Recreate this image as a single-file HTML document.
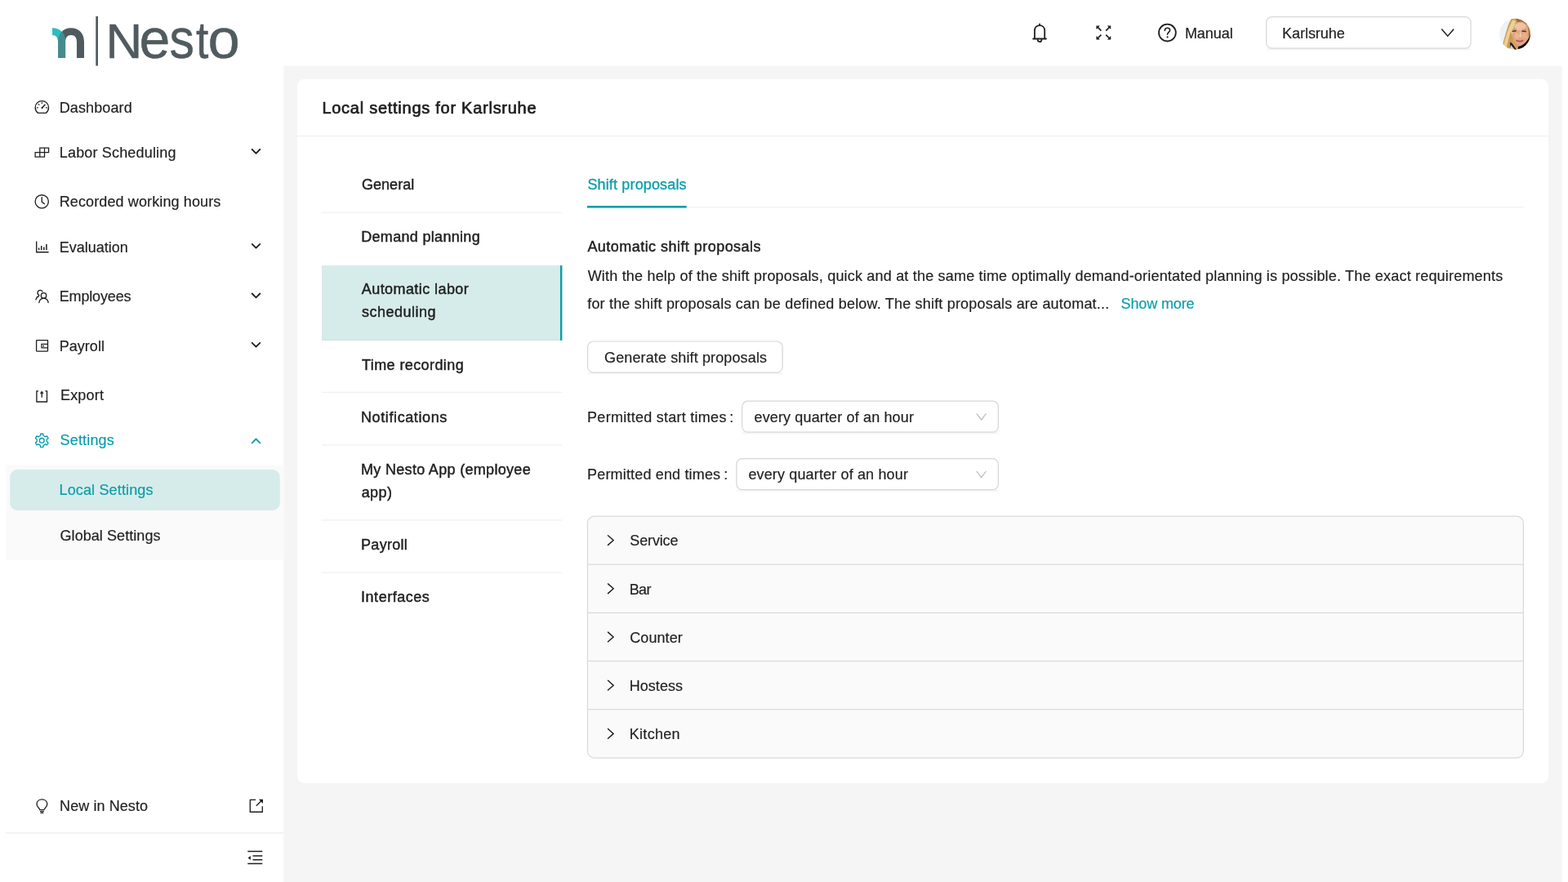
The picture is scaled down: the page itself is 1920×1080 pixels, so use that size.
<!DOCTYPE html>
<html lang="en">
<head>
<meta charset="utf-8">
<title>Nesto - Local settings for Karlsruhe</title>
<style>
*{box-sizing:border-box;margin:0;padding:0}
html,body{width:1920px;height:1080px;overflow:hidden;background:#fff}
body{position:relative;font-family:"Liberation Sans",sans-serif;font-size:18px;color:#1f1f1f}
.t{position:absolute;white-space:nowrap;line-height:24px;font-size:18px;-webkit-text-stroke:0.18px currentColor}
svg#bg,svg#ic{position:absolute;left:0;top:0;width:1920px;height:1080px;overflow:visible}
#txt{position:absolute;left:0;top:0;width:1920px;height:1080px;will-change:transform}
</style>
</head>
<body>
<svg id="bg" viewBox="0 0 1920 1080" width="1920" height="1080">
<rect x="347.30" y="80.70" width="1565.60" height="999.30" fill="#f5f5f5"/>
<rect x="364.00" y="96.70" width="1532.05" height="862.20" rx="9" fill="#ffffff"/>
<rect x="364.00" y="166.00" width="1532.05" height="1.20" fill="#f0f0f0"/>
<rect x="7.10" y="569.40" width="340.20" height="116.10" fill="#fafafa"/>
<rect x="12.20" y="575.00" width="330.55" height="49.90" rx="9" fill="#d6ecea"/>
<rect x="7.10" y="1019.40" width="340.20" height="1.20" fill="#ececec"/>
<rect x="394.00" y="259.60" width="294.20" height="1.20" fill="#f0f0f0"/>
<rect x="394.00" y="479.80" width="294.20" height="1.20" fill="#f0f0f0"/>
<rect x="394.00" y="544.40" width="294.20" height="1.20" fill="#f0f0f0"/>
<rect x="394.00" y="636.30" width="294.20" height="1.20" fill="#f0f0f0"/>
<rect x="394.00" y="700.50" width="294.20" height="1.20" fill="#f0f0f0"/>
<rect x="394.00" y="325.00" width="294.20" height="91.80" fill="#d6ecea"/>
<rect x="394.00" y="415.70" width="291.90" height="1.10" fill="#c9e1df"/>
<rect x="685.95" y="325.00" width="2.40" height="91.80" fill="#0a9daa"/>
<rect x="719.00" y="253.20" width="1147.00" height="1.20" fill="#f0f0f0"/>
<rect x="719.00" y="251.95" width="121.70" height="2.60" fill="#0a9daa"/>
<rect x="719.60" y="455.80" width="238.55" height="3.00" rx="3" fill="#000000" opacity="0.035"/>
<rect x="719.60" y="418.00" width="238.55" height="38.20" rx="6.90" fill="#ffffff" stroke="#d6d6d6" stroke-width="1.2"/>
<rect x="908.70" y="528.80" width="313.70" height="3.00" rx="3" fill="#000000" opacity="0.035"/>
<rect x="908.70" y="491.20" width="313.70" height="38.00" rx="6.90" fill="#ffffff" stroke="#d6d6d6" stroke-width="1.2"/>
<rect x="901.90" y="599.25" width="320.50" height="3.00" rx="3" fill="#000000" opacity="0.035"/>
<rect x="901.90" y="561.60" width="320.50" height="38.05" rx="6.90" fill="#ffffff" stroke="#d6d6d6" stroke-width="1.2"/>
<rect x="1550.60" y="58.80" width="250.40" height="3.00" rx="3" fill="#000000" opacity="0.035"/>
<rect x="1550.60" y="20.60" width="250.40" height="38.60" rx="6.90" fill="#ffffff" stroke="#d6d6d6" stroke-width="1.2"/>
<rect x="719.45" y="632.05" width="1145.95" height="296.05" rx="8.40" fill="#fafafa" stroke="#d9d9d9" stroke-width="1.2"/>
<rect x="719.50" y="690.60" width="1145.90" height="1.20" fill="#d9d9d9"/>
<rect x="719.50" y="749.85" width="1145.90" height="1.20" fill="#d9d9d9"/>
<rect x="719.50" y="808.90" width="1145.90" height="1.20" fill="#d9d9d9"/>
<rect x="719.50" y="868.10" width="1145.90" height="1.20" fill="#d9d9d9"/>
</svg>
<div id="txt">
<div class="t" style="left:1450.90px;top:29.06px;letter-spacing:-0.037px;">Manual</div>
<div class="t" style="left:1570.10px;top:29.06px;letter-spacing:-0.053px;">Karlsruhe</div>
<div class="t" style="left:72.75px;top:120.06px;letter-spacing:0.113px;">Dashboard</div>
<div class="t" style="left:72.80px;top:175.06px;letter-spacing:0.167px;">Labor Scheduling</div>
<div class="t" style="left:72.75px;top:235.06px;letter-spacing:0.117px;">Recorded working hours</div>
<div class="t" style="left:72.75px;top:291.06px;">Evaluation</div>
<div class="t" style="left:72.75px;top:351.06px;letter-spacing:-0.161px;">Employees</div>
<div class="t" style="left:72.75px;top:412.06px;letter-spacing:0.022px;">Payroll</div>
<div class="t" style="left:74.00px;top:472.06px;letter-spacing:0.176px;">Export</div>
<div class="t" style="left:73.50px;top:527.06px;color:#0a9daa;letter-spacing:0.180px;">Settings</div>
<div class="t" style="left:72.50px;top:588.06px;color:#0a9daa;letter-spacing:0.148px;">Local Settings</div>
<div class="t" style="left:73.50px;top:644.06px;letter-spacing:0.066px;">Global Settings</div>
<div class="t" style="left:73.10px;top:975.06px;letter-spacing:0.079px;">New in Nesto</div>
<div class="t" style="left:394.40px;top:120.37px;font-size:20px;letter-spacing:0.736px;-webkit-text-stroke:0.7px currentColor;">Local settings for Karlsruhe</div>
<div class="t" style="left:443.00px;top:214.06px;letter-spacing:0.027px;-webkit-text-stroke:0.45px currentColor;">General</div>
<div class="t" style="left:442.20px;top:278.06px;letter-spacing:0.315px;-webkit-text-stroke:0.45px currentColor;">Demand planning</div>
<div class="t" style="left:442.80px;top:342.06px;letter-spacing:0.424px;-webkit-text-stroke:0.45px currentColor;">Automatic labor</div>
<div class="t" style="left:442.90px;top:370.06px;letter-spacing:0.494px;-webkit-text-stroke:0.45px currentColor;">scheduling</div>
<div class="t" style="left:443.00px;top:435.06px;letter-spacing:0.411px;-webkit-text-stroke:0.45px currentColor;">Time recording</div>
<div class="t" style="left:442.00px;top:499.06px;letter-spacing:0.605px;-webkit-text-stroke:0.45px currentColor;">Notifications</div>
<div class="t" style="left:442.00px;top:563.06px;letter-spacing:0.315px;-webkit-text-stroke:0.45px currentColor;">My Nesto App (employee</div>
<div class="t" style="left:442.70px;top:591.06px;letter-spacing:0.423px;-webkit-text-stroke:0.45px currentColor;">app)</div>
<div class="t" style="left:442.10px;top:655.06px;letter-spacing:0.263px;-webkit-text-stroke:0.45px currentColor;">Payroll</div>
<div class="t" style="left:442.10px;top:719.06px;letter-spacing:0.507px;-webkit-text-stroke:0.45px currentColor;">Interfaces</div>
<div class="t" style="left:719.40px;top:214.06px;color:#0a9daa;letter-spacing:0.152px;-webkit-text-stroke:0.32px currentColor;">Shift proposals</div>
<div class="t" style="left:719.40px;top:290.06px;letter-spacing:0.459px;-webkit-text-stroke:0.45px currentColor;">Automatic shift proposals</div>
<div class="t" style="left:719.70px;top:326.06px;letter-spacing:0.193px;">With the help of the shift proposals, quick and at the same time optimally demand-orientated planning is possible. The exact requirements</div>
<div class="t" style="left:719.20px;top:360.06px;letter-spacing:0.189px;">for the shift proposals can be defined below. The shift proposals are automat...</div>
<div class="t" style="left:1372.50px;top:360.06px;color:#0a9daa;letter-spacing:-0.128px;">Show more</div>
<div class="t" style="left:740.00px;top:426.06px;letter-spacing:0.126px;">Generate shift proposals</div>
<div class="t" style="left:719.10px;top:499.06px;letter-spacing:0.263px;">Permitted start times</div>
<div class="t" style="left:893.20px;top:499.06px;">:</div>
<div class="t" style="left:923.50px;top:499.06px;letter-spacing:0.143px;">every quarter of an hour</div>
<div class="t" style="left:719.10px;top:569.06px;letter-spacing:0.163px;">Permitted end times</div>
<div class="t" style="left:886.20px;top:569.06px;">:</div>
<div class="t" style="left:916.40px;top:569.06px;letter-spacing:0.147px;">every quarter of an hour</div>
<div class="t" style="left:771.25px;top:650.06px;letter-spacing:-0.127px;">Service</div>
<div class="t" style="left:770.70px;top:710.06px;letter-spacing:-0.608px;">Bar</div>
<div class="t" style="left:771.25px;top:769.06px;letter-spacing:0.076px;">Counter</div>
<div class="t" style="left:770.70px;top:828.06px;letter-spacing:0.046px;">Hostess</div>
<div class="t" style="left:770.70px;top:887.06px;letter-spacing:0.312px;">Kitchen</div>
</div>
<svg id="ic" viewBox="0 0 1920 1080" width="1920" height="1080">
<defs>
<clipPath id="ngray"><path d="M71.06,71 V52 C71.06,41.5 77,34.3 87,34.3 C97,34.3 103,41 103,51.5 V71 H94 V52 C94,46 91.8,43 87,43 C82.4,43 80.1,46.2 80.1,52 V71 Z"/></clipPath>
<clipPath id="avc"><circle cx="1855" cy="41.8" r="19"/></clipPath>
<filter id="bl" x="-20%" y="-20%" width="140%" height="140%"><feGaussianBlur stdDeviation="0.75"/></filter>
</defs>
<!-- logo -->
<g id="logo">
<path d="M71.06,71 V52 C71.06,41.5 77,34.3 87,34.3 C97,34.3 103,41 103,51.5 V71 H94 V52 C94,46 91.8,43 87,43 C82.4,43 80.1,46.2 80.1,52 V71 Z" fill="#515a5f"/>
<path id="nteal" d="M64.06,34.3 C74.2,34.3 80.1,41 80.1,51.5 V71 H71.06 V52 C71.06,46 68.6,43 64.06,43 Z" fill="#2bbcc0"/>
<path d="M64.06,34.3 C74.2,34.3 80.1,41 80.1,51.5 V71 H71.06 V52 C71.06,46 68.6,43 64.06,43 Z" fill="#468a8f" clip-path="url(#ngray)"/>
<rect x="117.3" y="20" width="2.7" height="60.5" fill="#515a5f"/>
<text font-family="Liberation Sans, sans-serif" fill="#515a5f" stroke="#515a5f" stroke-width="0.5"><tspan x="129.52" y="70.80" font-size="59.88" textLength="44.73" lengthAdjust="spacingAndGlyphs">N</tspan><tspan x="170.41" y="70.74" font-size="68.08" textLength="37.81" lengthAdjust="spacingAndGlyphs">e</tspan><tspan x="207.61" y="70.73" font-size="68.27" textLength="30.39" lengthAdjust="spacingAndGlyphs">s</tspan><tspan x="239.96" y="70.71" font-size="62.20" textLength="15.34" lengthAdjust="spacingAndGlyphs">t</tspan><tspan x="254.64" y="70.74" font-size="68.08" textLength="39.22" lengthAdjust="spacingAndGlyphs">o</tspan></text>
</g>
<!-- header icons -->
<g fill="none" stroke="#1f1f1f" stroke-width="1.8" stroke-linecap="round" stroke-linejoin="round">
<!-- bell -->
<path d="M1273.05,29.4 V31.2 M1265.1,47.5 H1281 M1266.9,47.3 V37.6 C1266.9,33.7 1269.6,31.2 1273.05,31.2 C1276.5,31.2 1279.2,33.7 1279.2,37.6 V47.3 M1270.7,49.2 C1271,50.6 1272,51.2 1273.05,51.2 C1274.1,51.2 1275.1,50.6 1275.4,49.2"/>
<!-- question -->
<circle cx="1429.4" cy="40.1" r="10.4"/>
</g>
<g fill="none" stroke="#1f1f1f" stroke-width="1.6" stroke-linecap="round" stroke-linejoin="round">
<path d="M1426.3,37.4 C1426.3,35.4 1427.7,34.2 1429.5,34.2 C1431.3,34.2 1432.6,35.4 1432.6,37 C1432.6,39.3 1429.5,39.6 1429.5,42.3"/>
</g>
<circle cx="1429.5" cy="45.4" r="1.05" fill="#1f1f1f"/>
<!-- fullscreen -->
<g stroke="#1f1f1f" stroke-width="1.7" stroke-linecap="butt" fill="#1f1f1f">
<path d="M1344,33.2 L1348.4,37.6 M1358.6,33.2 L1354.2,37.6 M1344,47 L1348.4,42.6 M1358.6,47 L1354.2,42.6" fill="none"/>
<path d="M1342.4,31.6 H1346.9 L1342.4,36.1 Z M1360.2,31.6 H1355.7 L1360.2,36.1 Z M1342.4,48.6 H1346.9 L1342.4,44.1 Z M1360.2,48.6 H1355.7 L1360.2,44.1 Z" stroke="none"/>
</g>
<!-- header select arrow -->
<path d="M1765.6,36 L1772.7,44.2 L1779.8,36" fill="none" stroke="#1f1f1f" stroke-width="1.5" stroke-linecap="round" stroke-linejoin="miter"/>
<!-- form select arrows -->
<g fill="none" stroke="#bfbfbf" stroke-width="1.3" stroke-linecap="round">
<path d="M1196.2,506.8 L1201.65,514.2 L1207.1,506.8"/>
<path d="M1196.2,577.3 L1201.65,584.7 L1207.1,577.3"/>
</g>
<!-- avatar -->
<g clip-path="url(#avc)">
<rect x="1835" y="21" width="41" height="42" fill="#edf2f6"/>
<g filter="url(#bl)">
<path d="M1851,22 C1860,20 1871,24 1876,38 L1877,64 L1838,64 C1840,54 1843,42 1847,30 Z" fill="#d3a05a"/>
<path d="M1856,23 C1862,22 1868,25 1872,31 L1866,29 L1858,27 Z" fill="#9a6a3a"/>
<path d="M1840,62 C1842,50 1846,36 1852,25 C1855,24 1857,26 1855,30 C1851,40 1850,52 1849,63 Z" fill="#ecd097"/>
<path d="M1844,62 C1846,52 1848,44 1850,38 L1852,46 L1849,62 Z" fill="#c99a58"/>
<ellipse cx="1862" cy="41.3" rx="10" ry="14.8" fill="#e2a680"/>
<ellipse cx="1861.5" cy="32.5" rx="6.8" ry="4.6" fill="#efc3a2"/>
<ellipse cx="1857.5" cy="44" rx="3" ry="3.4" fill="#ebb693"/>
<ellipse cx="1866.5" cy="44" rx="3" ry="3.2" fill="#e8b08d"/>
<path d="M1861.6,37 L1860.4,45.5 L1863.2,45.5 Z" fill="#f3cbb0"/>
<path d="M1870,27 C1873,31 1875,38 1874,46 L1871.5,44 C1872,38 1871.5,32 1869.5,28 Z" fill="#a9743f"/>
<path d="M1859,57 C1866,56 1871,50 1874.5,41 L1880,66 L1858,67 Z" fill="#07070b"/>
<path d="M1849.2,51.5 L1851.5,53 L1857.5,61.5 L1852,64 L1849,60 Z" fill="#161c33"/>
<path d="M1851.6,38.4 L1856.6,37.8 M1863.6,38 L1868.8,38.6" stroke="#3e2a20" stroke-width="1.4" fill="none"/>
<path d="M1851.4,36.3 L1856.6,35.6 M1863.6,35.8 L1869,36.4" stroke="#b98a62" stroke-width="0.7" fill="none"/>
<path d="M1856.4,49.6 C1859,50.9 1862.4,50.9 1865.2,49.4" stroke="#b4525c" stroke-width="1.7" fill="none"/>
<path d="M1850,55 L1855,61 L1858,64 L1848,64 Z" fill="#e6d3ad"/>
</g>
</g>
<!-- sidebar icons -->
<g fill="none" stroke="#1f1f1f" stroke-width="1.35" stroke-linecap="round" stroke-linejoin="round">
<!-- dashboard -->
<path d="M46.2,138.3 C44.3,136.6 43.2,134.2 43.2,131.5 C43.2,127 46.8,123.6 51.35,123.6 C55.9,123.6 59.5,127 59.5,131.5 C59.5,134.2 58.4,136.6 56.5,138.3 Z"/>
<path d="M51.6,132 L55,128.2" stroke-width="1.5"/>
<path d="M51.35,125.6 V126.6 M45.4,131.8 H46.4 M56.4,131.8 H57.4 M47.2,127.6 L47.9,128.3" stroke-width="1.2"/>
<!-- labor scheduling -->
<path d="M43.1,186.7 H48.8 V192.2 H43.1 Z M48.8,186.7 H54.5 V192.2 H48.8 M48.8,186.7 V181.2 H54.5 V186.7 M54.5,181.2 H59.6 V186.7 H54.5" stroke-linejoin="miter" stroke-linecap="square" stroke-width="1.25"/>
<!-- clock -->
<circle cx="51.25" cy="246.8" r="8.1"/>
<path d="M51.25,241.6 V247.2 L54.4,249.6"/>
<!-- bar chart -->
<path d="M44.7,296.2 V308.7 H58.9" stroke-linecap="square" stroke-linejoin="miter"/>
<path d="M47.6,303.6 V306.3 M50.7,301 V306.3 M53.8,302.6 V306.3 M56.9,299 V306.3" stroke-linecap="butt" stroke-width="1.5"/>
<!-- team -->
<circle cx="53.5" cy="361.9" r="3.2"/>
<path d="M47.9,370.5 C48.3,367.2 50.5,365.4 53.5,365.4 C56.5,365.4 58.7,367.2 59.1,370.5"/>
<path d="M51.9,356.9 A3.2,3.2 0 1 0 47.85,361.5 M47.6,362.5 C45.6,363.3 44.4,364.8 43.9,366.9"/>
<!-- wallet -->
<rect x="44.6" y="416.6" width="13.9" height="13.5" rx="0.5" stroke-linejoin="miter" stroke-width="1.3"/>
<path d="M58.5,421.3 H50.9 V425.8 H58.5" stroke-width="1.2" stroke-linejoin="miter" stroke-linecap="butt"/>
<!-- export -->
<path d="M47,478.8 H44.9 V492 H57.5 V478.8 H55.4" stroke-linejoin="miter" stroke-linecap="butt"/>
<path d="M51.2,480 V486.7" stroke-linecap="butt"/><path d="M49.3,481.7 L51.2,478.8 L53.1,481.7 Z" fill="#1f1f1f" stroke-width="0.4"/>
<!-- bulb -->
<path d="M48.9,991.6 C48.6,989.8 45,988.3 45,984.6 C45,981.1 47.8,978.8 51.4,978.8 C55,978.8 57.8,981.1 57.8,984.6 C57.8,988.3 54.2,989.8 53.9,991.6 Z"/>
<path d="M49.4,993.6 H53.4 M50,995.4 H52.8"/>
<!-- external link -->
<path d="M313.2,979.4 H306.3 V994.2 H321.3 V987.2" stroke-linejoin="miter" stroke-linecap="butt"/>
<path d="M313.8,986.8 L320.6,980" stroke-linecap="butt"/>
<!-- collapse -->
<path d="M303.3,1042.5 H321.3 M309.5,1048 H321.3 M309.5,1052.7 H321.3 M303.3,1057.5 H321.3" stroke-linecap="butt" stroke-width="1.4"/>
</g>
<circle cx="53.2" cy="423.65" r="0.95" fill="#1f1f1f"/>
<path d="M316.8,978.7 H322 V983.9 Z" fill="#1f1f1f"/>
<path d="M303.6,1050.4 L306.8,1047.9 V1052.9 Z" fill="#1f1f1f"/>
<circle cx="51.5" cy="132.1" r="1.1" fill="#1f1f1f"/>
<!-- gear -->
<g fill="none" stroke="#0a9daa" stroke-width="1.35" stroke-linejoin="round"><path d="M49.44,533.47 L49.67,531.25 L52.83,531.25 L53.06,533.47 L55.48,534.87 L57.51,533.95 L59.10,536.70 L57.29,538.01 L57.29,540.79 L59.10,542.10 L57.51,544.85 L55.48,543.93 L53.06,545.33 L52.83,547.55 L49.67,547.55 L49.44,545.33 L47.02,543.93 L44.99,544.85 L43.40,542.10 L45.21,540.79 L45.21,538.01 L43.40,536.70 L44.99,533.95 L47.02,534.87 Z"/><circle cx="51.25" cy="539.4" r="2.9"/></g>
<!-- sidebar chevrons -->
<g fill="none" stroke="#1f1f1f" stroke-width="1.8" stroke-linecap="round" stroke-linejoin="round">
<path d="M308.7,183 L313.5,187.8 L318.3,183"/>
<path d="M308.7,298.9 L313.5,303.7 L318.3,298.9"/>
<path d="M308.7,359.5 L313.5,364.3 L318.3,359.5"/>
<path d="M308.7,419.8 L313.5,424.6 L318.3,419.8"/>
<path d="M308.7,542.3 L313.5,537.5 L318.3,542.3" stroke="#0a9daa"/>
</g>
<!-- collapse chevrons -->
<g fill="none" stroke="#1f1f1f" stroke-width="1.45" stroke-linecap="round" stroke-linejoin="miter">
<path d="M744.5,655.70 L751.1,661.55 L744.5,667.40"/>
<path d="M744.5,714.91 L751.1,720.76 L744.5,726.61"/>
<path d="M744.5,774.12 L751.1,779.97 L744.5,785.82"/>
<path d="M744.5,833.33 L751.1,839.18 L744.5,845.03"/>
<path d="M744.5,892.54 L751.1,898.39 L744.5,904.24"/>
</g>
</svg>

</body>
</html>
